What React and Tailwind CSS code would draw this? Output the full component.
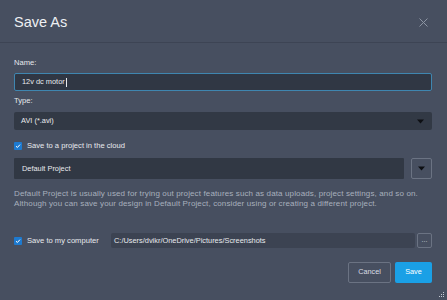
import React, { useState } from 'react';

const font = { fontFamily: '"Liberation Sans", Arial, sans-serif' };

const Check = () => (
    <span className="w-[8px] h-[8px] rounded-[1px] bg-[#1d7ad0] flex items-center justify-center shrink-0">
        <svg width="6" height="6" viewBox="0 0 6 6">
            <path d="M1 3.2 L2.4 4.5 L5 1.6" stroke="#fff" strokeWidth="1" fill="none" />
        </svg>
    </span>
);

const Caret = () => (
    <svg width="7" height="5" viewBox="0 0 7 5">
        <path d="M0 0.5 H7 L3.5 4.5 Z" fill="#0d0f13" />
    </svg>
);

const App = () => {
    const [name] = useState('12v dc motor');

    return (
        <div className="w-[447px] h-[300px] bg-[#474f60] flex flex-col relative" style={font}>
            <div className="h-[43px] px-[14px] pt-[3px] flex items-center justify-between border-b border-[#3d4454]">
                <h1 className="text-[14.5px] text-[#eef0f3] leading-none">Save As</h1>
                <svg width="9" height="9" viewBox="0 0 9 9" className="mr-[5px]">
                    <path d="M0.5 0.5 L8.5 8.5 M8.5 0.5 L0.5 8.5" stroke="#8d95a3" strokeWidth="1" />
                </svg>
            </div>

            <div className="pl-[14px] pr-[15px] pt-[14px] flex flex-col">
                <label className="text-[7.6px] leading-[12px] text-[#e6e8ec]">Name:</label>
                <div className="mt-[4px] h-[18px] rounded-[2px] border border-[#3f86b0] bg-[#303744] flex items-center px-[7px]">
                    <span className="text-[7.4px] text-[#e8eaee] whitespace-nowrap">{name}</span>
                    <span className="w-px h-[9px] bg-[#e8eaee] ml-px" />
                </div>

                <label className="mt-[4px] text-[7.6px] leading-[12px] text-[#e6e8ec]">Type:</label>
                <div className="mt-[5px] h-[18px] rounded-[2px] bg-[#323945] flex items-center justify-between pl-[7px] pr-[8px]">
                    <span className="text-[7.4px] text-[#e8eaee]">AVI (*.avi)</span>
                    <Caret />
                </div>

                <div className="mt-[10px] h-[12px] flex items-center gap-[5px]">
                    <Check />
                    <span className="text-[7.6px] text-[#e8eaee]">Save to a project in the cloud</span>
                </div>

                <div className="mt-[6px] flex gap-[7px]">
                    <div className="flex-1 h-[21px] rounded-[1px] bg-[#313844] flex items-center px-[8px]">
                        <span className="text-[7.4px] text-[#e8eaee]">Default Project</span>
                    </div>
                    <div className="w-[21px] h-[21px] rounded-[2px] border border-[#6b7383] flex items-center justify-center">
                        <Caret />
                    </div>
                </div>

                <p className="mt-[10px] text-[8px] tracking-[0.13px] leading-[10px] text-[#a7afbd] whitespace-nowrap">
                    Default Project is usually used for trying out project features such as data uploads, project settings, and so on.
                    <br />
                    Although you can save your design in Default Project, consider using or creating a different project.
                </p>

                <div className="mt-[24px] flex items-center">
                    <Check />
                    <span className="ml-[5px] w-[84px] whitespace-nowrap text-[7.6px] text-[#e8eaee]">Save to my computer</span>
                    <div className="flex-1 h-[15px] rounded-[2px] bg-[#3c4352] flex items-center px-[3px]">
                        <span className="text-[7.4px] text-[#e8eaee] whitespace-nowrap">C:/Users/dvikr/OneDrive/Pictures/Screenshots</span>
                    </div>
                    <div className="ml-[2px] w-[15px] h-[15px] rounded-[2px] border border-[#6b7383] flex items-center justify-center">
                        <span className="text-[7px] text-[#c9ced7] leading-none -mt-[2px]">...</span>
                    </div>
                </div>

                <div className="mt-[14px] flex justify-end gap-[4px]">
                    <button className="w-[43px] h-[21px] rounded-[2px] border border-[#6b7383] text-[7.3px] text-[#d9dde4]">
                        Cancel
                    </button>
                    <button className="w-[37px] h-[21px] rounded-[2px] bg-[#1aa0e6] text-[7.3px] text-white">
                        Save
                    </button>
                </div>
            </div>

            <svg width="5" height="5" viewBox="0 0 5 5" className="absolute right-[3px] bottom-[3px]">
                <rect x="4" y="0" width="1" height="1" fill="#c5cad3" />
                <rect x="2" y="2" width="1" height="1" fill="#c5cad3" />
                <rect x="4" y="2" width="1" height="1" fill="#c5cad3" />
                <rect x="0" y="4" width="1" height="1" fill="#c5cad3" />
                <rect x="2" y="4" width="1" height="1" fill="#c5cad3" />
                <rect x="4" y="4" width="1" height="1" fill="#c5cad3" />
            </svg>
        </div>
    );
};

export default App;
